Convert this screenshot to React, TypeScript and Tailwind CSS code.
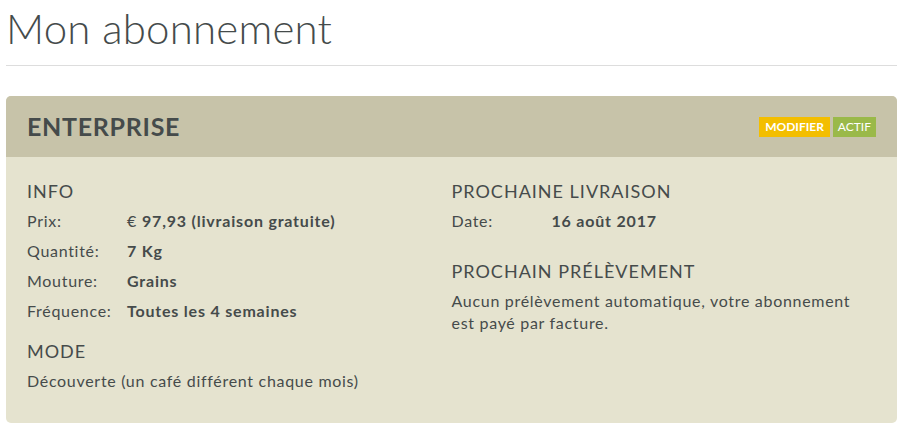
import React from "react";

const font = { fontFamily: '"Lato", "Noto Sans", sans-serif' };

function Row({ label, value }: { label: string; value: React.ReactNode }) {
  return (
    <div className="flex h-[30px] items-center text-[16px] tracking-[0.7px]">
      <span className="w-[100px] shrink-0">{label}</span>
      <span className="font-bold tracking-[0.8px]">{value}</span>
    </div>
  );
}

export default function App() {
  return (
    <div className="min-h-[430px] bg-white px-[6px] text-[#454b4b]" style={font}>
      <h1 className="pt-[2px] text-[42px] font-light leading-[52px] tracking-[0.2px]">
        Mon abonnement
      </h1>
      <div className="mt-[11px] h-px bg-[#dddddd]" />
      <div className="mt-[30px] overflow-hidden rounded-[5px] bg-[#e5e3cf]">
        <div className="flex h-[61px] items-center justify-between bg-[#c7c3a9] pl-[21px] pr-[21px]">
          <div className="text-[25px] font-bold tracking-[0.7px]">ENTERPRISE</div>
          <div className="flex gap-[3px] pt-[1px] text-[12px] font-bold text-white">
            <span className="flex h-[20px] items-center bg-[#f3be00] px-[6px]">MODIFIER</span>
            <span className="flex h-[20px] items-center bg-[#9ab949] px-[5px] font-normal">ACTIF</span>
          </div>
        </div>
        <div className="grid grid-cols-2 px-[21px] pt-[19px] pb-[27px]">
          <div>
            <div className="flex h-[30px] items-center text-[18px] tracking-[1px]">INFO</div>
            <Row label="Prix:" value={<><span className="font-normal">€ </span>97,93 (livraison gratuite)</>} />
            <Row label="Quantité:" value="7 Kg" />
            <Row label="Mouture:" value="Grains" />
            <Row label="Fréquence:" value="Toutes les 4 semaines" />
            <div className="mt-[10px] flex h-[30px] items-center text-[18px] tracking-[1px]">MODE</div>
            <div className="flex h-[30px] items-center text-[16px] tracking-[0.7px]">Découverte (un café différent chaque mois)</div>
          </div>
          <div>
            <div className="flex h-[30px] items-center text-[18px] tracking-[1px]">PROCHAINE LIVRAISON</div>
            <Row label="Date:" value="16 août 2017" />
            <div className="mt-[20px] flex h-[30px] items-center text-[18px] tracking-[1px]">PROCHAIN PRÉLÈVEMENT</div>
            <p className="mt-[4px] max-w-[420px] text-[16px] leading-[22px] tracking-[0.7px]">
              Aucun prélèvement automatique, votre abonnement est payé par facture.
            </p>
          </div>
        </div>
      </div>
    </div>
  );
}
